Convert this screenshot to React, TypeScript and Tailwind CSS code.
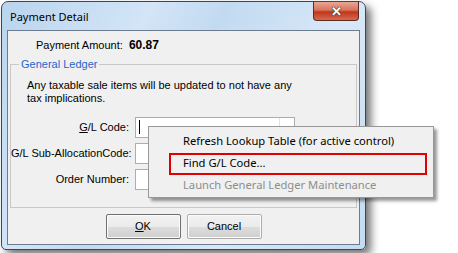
import React from "react";

export default function App() {
  return (
    <div className="w-[458px] h-[253px] bg-white overflow-hidden relative" style={{ fontFamily: '"Noto Sans", "Liberation Sans", sans-serif' }}>
      {/* Window */}
      <div className="ml-[1px] mt-[1px] w-[365px] h-[249px] rounded-t-[7px] rounded-b-[5px] border border-[#3c4654] bg-[linear-gradient(120deg,#b9d4ee_0%,#d3e5f7_30%,#c2daf1_45%,#d8e8f8_70%,#c4dbf1_100%)] shadow-[5px_5px_8px_rgba(0,0,0,0.55)] flex flex-col px-[5px] pb-[4px] relative">
        {/* Title bar */}
        <div className="h-[28px] flex items-start shrink-0">
          <div className="pt-[8px] pl-[3px] text-[11px] leading-[14px] text-black">Payment Detail</div>
          <div className="ml-auto mr-[1px] w-[46px] h-[19px] rounded-b-[4px] border border-t-0 border-[#5b2a22] bg-[linear-gradient(180deg,#e9a797_0%,#d9735b_45%,#c0361c_55%,#d66a4e_100%)] flex items-center justify-center">
            <span className="text-white font-bold text-[13px] leading-none" style={{ textShadow: "0 0 1px #333, 0 0 1px #333, 0 0 1px #333" }}>✕</span>
          </div>
        </div>
        {/* Client area */}
        <div className="flex-1 border border-[#6c7c8e] bg-[#f0f0f0] flex flex-col" style={{ fontFamily: '"Liberation Sans", sans-serif' }}>
          <div className="pt-[8px] pl-[28px] text-[11px] leading-[13px] text-black">
            Payment Amount:&nbsp;&nbsp;<span className="font-bold text-[12px]">60.87</span>
          </div>
          <fieldset className="mx-[2px] mt-[6px] border border-[#c8c8c8] h-[150px] px-0">
            <legend className="ml-[8px] px-[2px] text-[11px] leading-[13px] text-[#1f66cc]">General Ledger</legend>
            <div className="pl-[16px] pt-[8px] text-[11px] leading-[13px] text-black">
              Any taxable sale items will be updated to not have any<br />tax implications.
            </div>
            <div className="mt-[12px] grid grid-cols-[118px_160px] gap-x-[6px] gap-y-[5px] items-center text-[11px] text-black">
              <div className="text-right whitespace-nowrap"><span className="underline">G</span>/L Code:</div>
              <div className="h-[21px] border border-[#abadb3] bg-white flex">
                <div className="flex-1 relative">
                  <div className="absolute left-[3px] top-[2px] w-[1px] h-[14px] bg-black" />
                </div>
                <div className="w-[15px] border-l border-[#e2e3ea]" />
              </div>
              <div className="text-right whitespace-nowrap">G/L Sub-AllocationCode:</div>
              <div className="h-[21px] border border-[#abadb3] bg-white" />
              <div className="text-right whitespace-nowrap">Order Number:</div>
              <div className="h-[21px] border border-[#abadb3] bg-white" />
            </div>
          </fieldset>
          <div className="flex justify-center gap-[6px] mt-[6px] text-[11px]">
            <div className="w-[75px] h-[25px] border border-[#707070] rounded-[2px] bg-[linear-gradient(180deg,#f2f2f2_0%,#ebebeb_50%,#dddddd_51%,#cfcfcf_100%)] flex items-center justify-center shadow-[inset_0_0_0_1px_#fcfcfc]">
              <span><span className="underline">O</span>K</span>
            </div>
            <div className="w-[75px] h-[25px] border border-[#acacac] rounded-[2px] bg-[linear-gradient(180deg,#f2f2f2_0%,#ebebeb_50%,#dddddd_51%,#cfcfcf_100%)] flex items-center justify-center shadow-[inset_0_0_0_1px_#fcfcfc]">
              Cancel
            </div>
          </div>
        </div>
      </div>
      {/* Context menu */}
      <div className="absolute left-[148px] top-[126px] w-[286px] h-[72px] bg-[#f0f0f0] border border-[#979797] shadow-[3px_3px_3px_rgba(0,0,0,0.4)] py-[3px] text-[11.2px]" style={{ fontFamily: '"Noto Sans", "Liberation Sans", sans-serif' }}>
        <div className="h-[22px] flex items-center pl-[34px] text-black">Refresh Lookup Table (for active control)</div>
        <div className="h-[22px] flex items-center pl-[34px] text-black">Find G/L Code...</div>
        <div className="h-[22px] flex items-center pl-[34px] text-[#8d8d8d]">Launch General Ledger Maintenance</div>
        <div className="absolute left-[20px] top-[26px] w-[258px] h-[22px] border-2 border-[#e00000]" />
      </div>
    </div>
  );
}
